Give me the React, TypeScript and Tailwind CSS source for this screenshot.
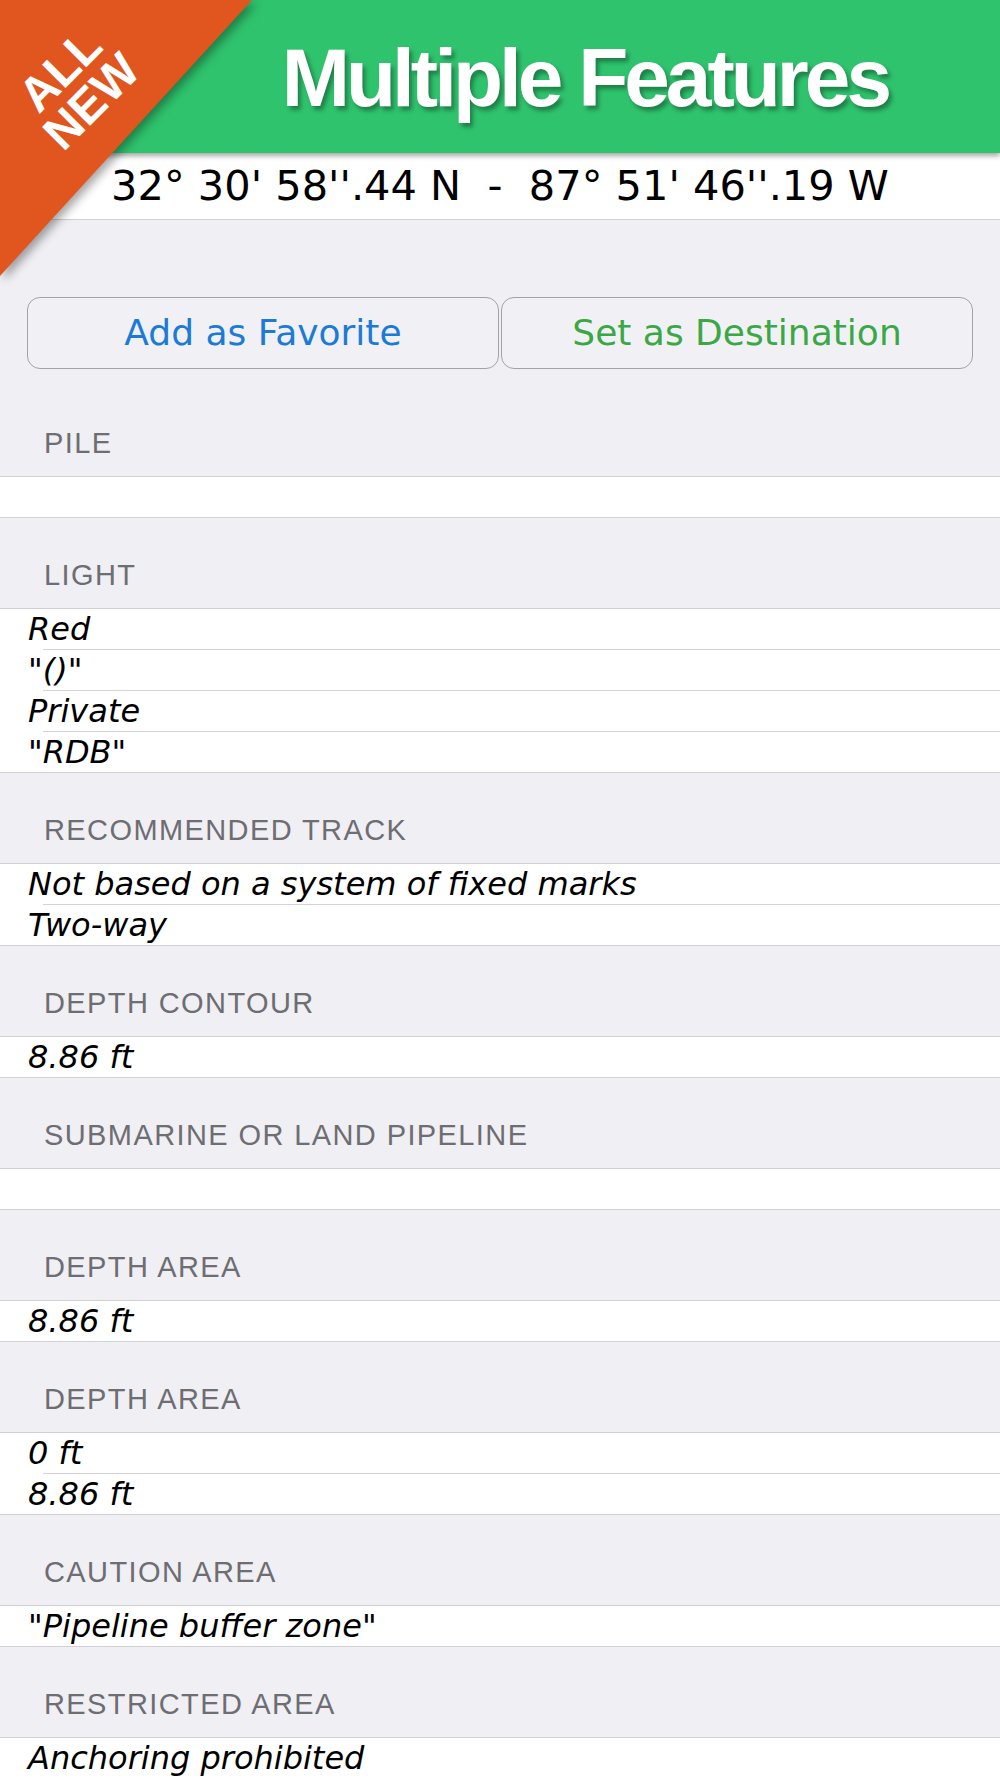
import * as React from "react";

// sections of the feature info sheet
const groups = [
  { title: "PILE", items: [""], first: true },
  { title: "LIGHT", items: ["Red", '"()"', "Private", '"RDB"'] },
  { title: "RECOMMENDED TRACK", items: ["Not based on a system of fixed marks", "Two-way"] },
  { title: "DEPTH CONTOUR", items: ["8.86 ft"] },
  { title: "SUBMARINE OR LAND PIPELINE", items: [""] },
  { title: "DEPTH AREA", items: ["8.86 ft"] },
  { title: "DEPTH AREA", items: ["0 ft", "8.86 ft"] },
  { title: "CAUTION AREA", items: ['"Pipeline buffer zone"'] },
  { title: "RESTRICTED AREA", items: ["Anchoring prohibited"] },
];

const body = "font-['DejaVu_Sans',sans-serif]";

function Group({ title, items, first }: { title: string; items: string[]; first?: boolean }) {
  return (
    <div>
      <div
        className={`${first ? "h-[107px]" : "h-[90px]"} flex items-end pb-[16px] pl-[44px] font-['Liberation_Sans',Arial,sans-serif] text-[29px] leading-[34px] tracking-[1.4px] text-[#6d6d72]`}
      >
        {title}
      </div>
      <div className="h-px bg-[#cfcfd4]" />
      <div className="bg-white">
        {items.map((item, i) => (
          <div key={i}>
            <div className={`h-[40px] flex items-center pl-[28px] ${body} italic text-[32px] text-black whitespace-pre`}>
              {item}
            </div>
            {i < items.length - 1 ? (
              <div className="h-px ml-[43px] bg-[#d4d4d8]" />
            ) : (
              <div className="h-px bg-[#cfcfd4]" />
            )}
          </div>
        ))}
      </div>
    </div>
  );
}

function App() {
  return (
    <main className="relative w-[1000px] min-h-[1778px] bg-[#efeff4] overflow-hidden">
      {/* green banner */}
      <header className="relative z-10 h-[153px] bg-[#2fc36d] shadow-[0_3px_5px_rgba(0,0,0,0.35)] flex items-center justify-end pr-[112px] pt-[3px]">
        <h1 className="font-['Liberation_Sans',Arial,sans-serif] font-bold text-[82px] leading-none tracking-[-4px] text-white [text-shadow:3px_4px_4px_rgba(0,0,0,0.35)]">
          Multiple Features
        </h1>
      </header>

      {/* coordinates */}
      <div className={`h-[67px] bg-white border-b border-[#cfcfd4] flex items-center justify-center ${body} text-[41.5px] text-black whitespace-pre`}>
        {"32° 30' 58''.44 N  -  87° 51' 46''.19 W"}
      </div>

      {/* actions */}
      <div className="mt-[77px] px-[27px] flex gap-[2px]">
        <button className={`flex-1 h-[72px] rounded-[13px] border-[1.5px] border-[#a2a2a8] bg-[#f1f1f5] ${body} text-[36px] text-[#1b7bd6]`}>
          Add as Favorite
        </button>
        <button className={`flex-1 h-[72px] rounded-[13px] border-[1.5px] border-[#a2a2a8] bg-[#f1f1f5] ${body} text-[36px] text-[#3aa845]`}>
          Set as Destination
        </button>
      </div>

      {groups.map((g, i) => (
        <Group key={i} title={g.title} items={g.items} first={g.first} />
      ))}

      {/* "ALL NEW" corner ribbon */}
      <svg
        className="absolute left-0 top-0 z-20 drop-shadow-[4px_4px_5px_rgba(0,0,0,0.35)]"
        width="270"
        height="290"
        viewBox="0 0 270 290"
      >
        <polygon points="0,0 252,0 0,276" fill="#e0561e" />
      </svg>
      <p className="absolute z-30 left-[76px] top-[86px] -translate-x-1/2 -translate-y-1/2 -rotate-45 text-center font-['Liberation_Sans',Arial,sans-serif] font-bold text-[48px] leading-[44px] text-white">
        ALL
        <br />
        NEW
      </p>
    </main>
  );
}

export default App;
